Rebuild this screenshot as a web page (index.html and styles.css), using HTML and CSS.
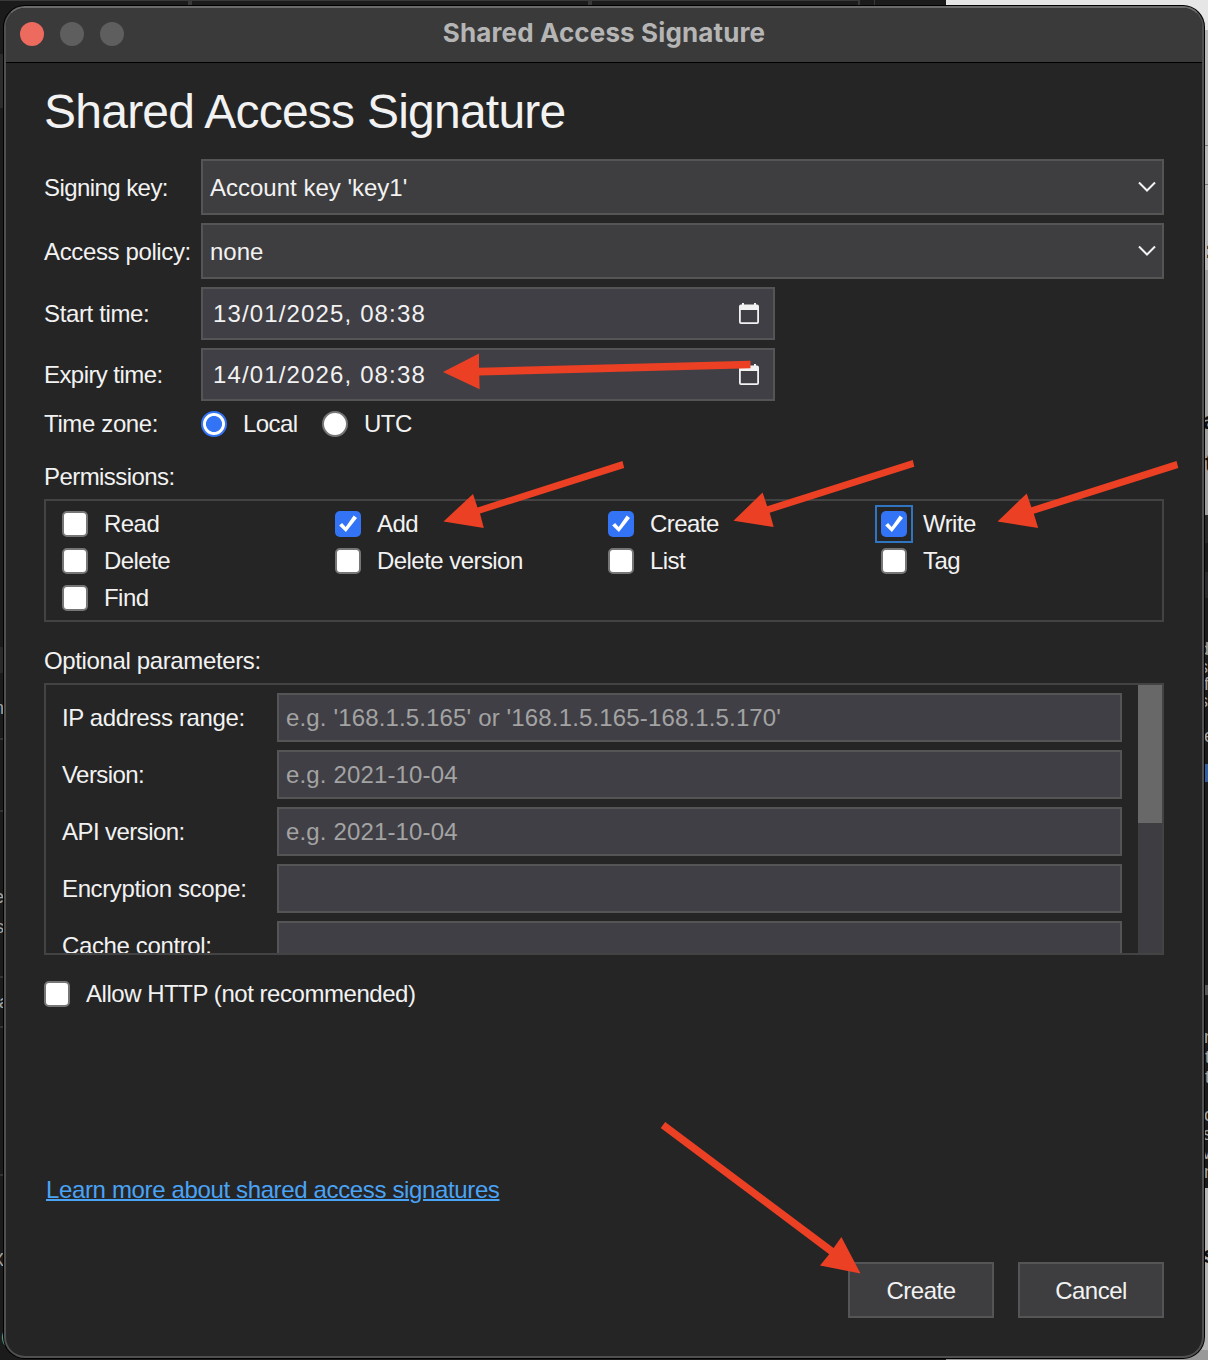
FILE: index.html
```html
<!DOCTYPE html>
<html lang="en">
<head>
<meta charset="utf-8">
<title>Shared Access Signature</title>
<link rel="stylesheet" href="styles.css">
</head>
<body>
<svg class="desktop" width="1208" height="1360" viewBox="0 0 1208 1360" aria-hidden="true">
  <rect width="1208" height="1360" fill="#1b1b1b"/>
  <path fill="#393939" d="M0 0h860v1H0zM188 1h4v5h-4zM588 1h4v5h-4zM858 1h2v5h-2zM874 0h1v6h-1z"/>
  <rect x="0" y="54" width="4" height="54" fill="#2c2c2c"/>
  <rect x="0" y="647" width="4" height="26" fill="#292929"/>
  <path fill="#333" d="M0 738h4v2H0zM0 810h4v2H0zM0 976h4v2H0zM0 1026h4v2H0zM0 1174h4v2H0z"/>
  <rect x="946" y="0" width="262" height="30" fill="#e6e6e6"/>
  <rect x="1200" y="30" width="8" height="240" fill="#b9b9b9"/>
  <rect x="1200" y="270" width="8" height="245" fill="#9f9f9f"/>
  <path fill="#777" d="M1205 145h3v1h-3zM1205 184h3v1h-3z"/>
  <rect x="1205" y="515" width="3" height="28" fill="#292929"/>
  <rect x="1205" y="572" width="3" height="26" fill="#2a2a2e"/>
  <rect x="1205" y="764" width="3" height="18" fill="#315c9f"/>
  <rect x="1205" y="985" width="3" height="10" fill="#555"/>
  <rect x="1200" y="1188" width="8" height="172" fill="#b5b5b5"/>
  <rect x="946" y="1350" width="262" height="10" fill="#999"/>
  <g class="behind">
    <text x="-6" y="714">n</text><text x="-6" y="903">e</text><text x="-5" y="933">s</text><text x="-1" y="1008">a</text><text x="-8" y="1266">X</text>
    <text x="1" y="1342" fill="#7fae78">(</text>
    <text x="1199" y="655">d</text><text x="1199" y="673">s</text><text x="1204" y="690">f</text><text x="1199" y="707">s</text><text x="1204" y="742">e</text>
    <text x="1204" y="1043">n</text><text x="1205" y="1063">t</text><text x="1205" y="1083">t</text><text x="1204" y="1121">c</text><text x="1199" y="1140">is</text><text x="1202" y="1159">v</text><text x="1204" y="1178">n</text>
  </g>
  <g class="behind behind-dark">
    <text x="1203" y="429">a</text><text x="1205" y="471">t</text><text x="1203" y="1263">s</text><text x="1205" y="258">:</text>
  </g>
</svg>

<main class="window">
  <header class="titlebar">
    <div class="lights"><i class="light close"></i><i class="light"></i><i class="light"></i></div>
    <div class="title">Shared Access Signature</div>
  </header>

  <div class="content">
    <h1>Shared Access Signature</h1>

    <div class="form">
      <span class="label tight low">Signing key:</span>
      <div class="select"><span>Account key 'key1'</span><svg width="20" height="12" viewBox="0 0 20 12"><path d="M2 1.5l8 8 8-8" fill="none" stroke="#f2f2f2" stroke-width="2"/></svg></div>
      <span class="label low">Access policy:</span>
      <div class="select"><span>none</span><svg width="20" height="12" viewBox="0 0 20 12"><path d="M2 1.5l8 8 8-8" fill="none" stroke="#f2f2f2" stroke-width="2"/></svg></div>
      <span class="label">Start time:</span>
      <div class="date"><span>13/01/2025, 08:38</span><svg width="20" height="22" viewBox="0 0 20 22"><path fill="#f2f2f2" fill-rule="evenodd" d="M3 0h2v1.5h10V0h2v1.5h1a2 2 0 0 1 2 2V19a2 2 0 0 1-2 2H2a2 2 0 0 1-2-2V3.500a2 2 0 0 1 2-2h1zM1.800 7v12.200h16.400V7z"/></svg></div>
      <span class="label tight">Expiry time:</span>
      <div class="date"><span>14/01/2026, 08:38</span><svg width="20" height="22" viewBox="0 0 20 22"><path fill="#f2f2f2" fill-rule="evenodd" d="M3 0h2v1.5h10V0h2v1.5h1a2 2 0 0 1 2 2V19a2 2 0 0 1-2 2H2a2 2 0 0 1-2-2V3.500a2 2 0 0 1 2-2h1zM1.800 7v12.200h16.400V7z"/></svg></div>
    </div>

    <div class="zone">
      <span class="label">Time zone:</span>
      <label class="choice"><input type="radio" name="zone" checked>Local</label>
      <label class="choice"><input type="radio" name="zone">UTC</label>
    </div>

    <div class="section tight">Permissions:</div>
    <div class="permissions">
      <label class="choice"><input type="checkbox">Read</label>
      <label class="choice"><input type="checkbox" checked>Add</label>
      <label class="choice"><input type="checkbox" checked>Create</label>
      <label class="choice"><input type="checkbox" class="focused" checked>Write</label>
      <label class="choice"><input type="checkbox">Delete</label>
      <label class="choice"><input type="checkbox">Delete version</label>
      <label class="choice"><input type="checkbox">List</label>
      <label class="choice"><input type="checkbox">Tag</label>
      <label class="choice"><input type="checkbox">Find</label>
    </div>

    <div class="section section-optional">Optional parameters:</div>
    <div class="optional">
      <div class="params">
        <span class="label">IP address range:</span><input class="text" placeholder="e.g. '168.1.5.165' or '168.1.5.165-168.1.5.170'">
        <span class="label tight">Version:</span><input class="text" placeholder="e.g. 2021-10-04">
        <span class="label tight">API version:</span><input class="text" placeholder="e.g. 2021-10-04">
        <span class="label">Encryption scope:</span><input class="text">
        <span class="label">Cache control:</span><input class="text">
      </div>
      <div class="track"><div class="thumb"></div></div>
    </div>

    <label class="choice allow"><input type="checkbox">Allow HTTP (not recommended)</label>

    <a class="learn" href="#">Learn more about shared access signatures</a>

    <footer class="actions">
      <button>Create</button>
      <button>Cancel</button>
    </footer>
  </div>
</main>

<svg class="arrows" width="1208" height="1360" viewBox="0 0 1208 1360" aria-hidden="true">
  <path d="M443 372L479 353.5V367.8L750.5 360.8V368.3L479.3 375.600 479.600 389.200z"/>
  <path d="M443.500 521.500L473 494 477.500 507.500 622.500 461 624.200 468 480 513.500 483.800 528z"/>
  <path d="M733.500 520.800L762.600 492.500 767.200 506.300 912.800 460 914.300 466.800 769.700 512.700 773.700 527z"/>
  <path d="M997.500 521.600L1026.700 493.500 1031.400 507.300 1176.500 461 1178.300 468 1033.800 513.800 1038.200 528z"/>
  <path d="M860.500 1273.500L841.400 1237 833.600 1248 665.200 1122 660.700 1128 829.200 1254.200 820 1265.600z"/>
</svg>
</body>
</html>
```
FILE: styles.css
```css
* { box-sizing: border-box; }

body {
  margin: 0;
  width: 1208px;
  height: 1360px;
  overflow: hidden;
  position: relative;
  background: #1b1b1b;
  color: #f2f2f2;
  font: 24px/30px "Liberation Sans", Arial, sans-serif;
  letter-spacing: -0.37px;
}

.desktop, .arrows { position: absolute; left: 0; top: 0; }
.arrows { fill: #eb4024; pointer-events: none; }
.behind { font-size: 18px; letter-spacing: 0; fill: #a5a5a5; }
.behind-dark { font-size: 24px; font-weight: bold; fill: #111; }

.window {
  position: relative;
  width: 1200px;
  height: 1352px;
  margin: 6px 0 0 4px;
  border: 2px solid #505050;
  border-top-color: #6b6b6b;
  border-radius: 21px;
  background: #252525;
  box-shadow: 0 0 0 1px #000;
  overflow: hidden;
}

.titlebar {
  display: grid;
  grid-template-columns: 1fr auto 1fr;
  align-items: center;
  height: 55px;
  padding: 0 14px 3px;
  background: #3a3a3a;
  border-bottom: 1px solid #000;
}
.lights { display: flex; gap: 16px; }
.light { width: 24px; height: 24px; border-radius: 50%; background: #5e5e5e; }
.light.close { background: #ed6a5e; }
.title {
  padding-bottom: 2px;
  font: 700 26px/30px Inter, sans-serif;
  letter-spacing: 0.13px;
  color: #b5b5b5;
}

.content { display: flex; flex-direction: column; padding: 21px 38px 0; }
h1 { margin: 0 0 19px; font-size: 48px; line-height: 56px; font-weight: 400; letter-spacing: -0.76px; }

.form { display: grid; grid-template-columns: 157px 1fr; row-gap: 8px; align-items: center; }
.label { white-space: nowrap; }
.tight { letter-spacing: -0.57px; }
.low { padding-top: 2px; }

.select, .date {
  display: flex;
  align-items: center;
  justify-content: space-between;
  border: 2px solid #555;
}
.select { height: 56px; padding: 0 5px 0 7px; background: #3e3e40; letter-spacing: 0; }
.select span { padding-top: 2px; }
.date { width: 574px; height: 53px; padding: 0 14px 0 10px; background: #403f45; letter-spacing: 1.14px; }

.zone { display: flex; align-items: center; height: 26px; margin-top: 10px; }
.zone .label { width: 157px; }
.zone .choice { width: 121px; }

.choice { display: flex; align-items: center; gap: 16px; height: 26px; white-space: nowrap; letter-spacing: -0.55px; }
.choice input {
  appearance: none;
  flex: none;
  width: 26px;
  height: 26px;
  margin: 0;
  border: 2px solid #767676;
  border-radius: 5px;
  background: #fff;
}
.choice input[type="radio"] { border-radius: 50%; }
.choice input[type="radio"]:checked {
  border-color: #3374f6;
  background: radial-gradient(circle, #3374f6 7.6px, #fff 8.4px);
}
.choice input[type="checkbox"]:checked {
  border: 0;
  background: #3374f6 url("data:image/svg+xml,%3Csvg xmlns='http://www.w3.org/2000/svg' viewBox='0 0 26 26'%3E%3Cpath d='M4.2 14.6L7.1 12l3.600 3.900 8-11.300 3.300 2.400L10.900 21z' fill='white'/%3E%3C/svg%3E") center / 26px no-repeat;
}
.choice input.focused { position: relative; outline: none; }
.choice input.focused::after {
  content: "";
  position: absolute;
  inset: -6px;
  border: 2px solid #2f75c2;
}

.section { margin: 25px 0 7px; }
.section-optional { margin-top: 24px; }

.permissions {
  display: grid;
  grid-template-columns: repeat(4, 273px);
  align-content: start;
  row-gap: 11px;
  height: 123px;
  padding: 10px 16px;
  border: 2px solid #434343;
}

.optional { display: flex; justify-content: space-between; height: 272px; border: 2px solid #434343; overflow: hidden; }
.params {
  display: grid;
  grid-template-columns: 215px 845px;
  grid-auto-rows: 49px;
  row-gap: 8px;
  align-items: center;
  padding: 8px 0 0 16px;
}
.text {
  width: 845px;
  height: 49px;
  padding: 0 7px;
  border: 2px solid #555;
  border-radius: 0;
  background: #403f45;
  font: inherit;
  letter-spacing: 0.15px;
  color: inherit;
}
.text::placeholder { color: #a3a3a3; opacity: 1; }
.track { width: 24px; background: #3e3e42; }
.thumb { height: 138px; background: #686868; }

.allow { margin-top: 26px; letter-spacing: -0.46px; }
.learn { align-self: flex-start; margin: 168px 0 0 2px; color: #4aa3f5; letter-spacing: -0.36px; text-decoration-thickness: 2px; }

.actions { display: flex; justify-content: flex-end; gap: 24px; margin-top: 57px; }
button {
  width: 146px;
  height: 56px;
  padding: 2px 0 0;
  border: 2px solid #555;
  background: #3e3e40;
  color: inherit;
  font: inherit;
  letter-spacing: -0.5px;
}
```
